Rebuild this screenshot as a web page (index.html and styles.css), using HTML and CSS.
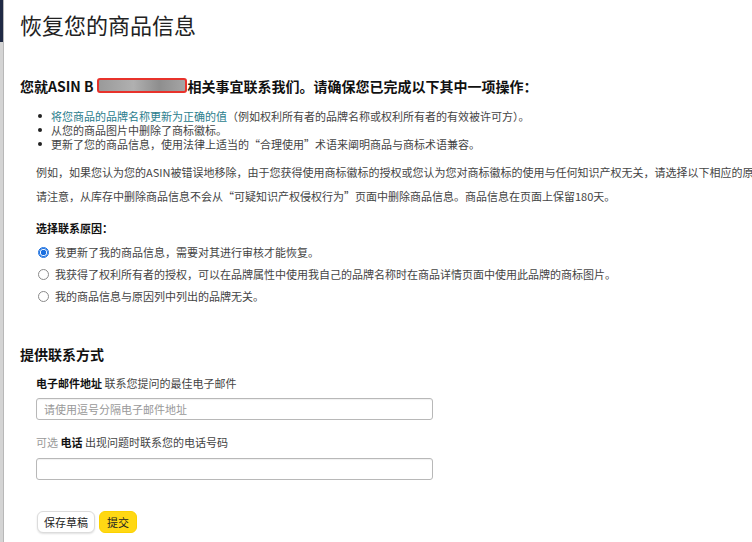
FILE: index.html
```html
<!DOCTYPE html>
<html lang="zh-CN">
<head>
<meta charset="utf-8">
<title>恢复您的商品信息</title>
<link rel="stylesheet" href="styles.css">
</head>
<body>
<div class="frame">
  <div class="edge"><div class="edge-top"></div></div>
  <main class="content">
    <h1 class="title">恢复您的商品信息</h1>
    <h2 class="lead">您就ASIN B<span class="redact"></span>相关事宜联系我们。请确保您已完成以下其中一项操作：</h2>
    <ul class="steps">
      <li><a class="link" href="#">将您商品的品牌名称更新为正确的值</a>（例如权利所有者的品牌名称或权利所有者的有效被许可方）。</li>
      <li>从您的商品图片中删除了商标徽标。</li>
      <li>更新了您的商品信息，使用法律上适当的“合理使用”术语来阐明商品与商标术语兼容。</li>
    </ul>
    <p class="note">例如，如果您认为您的ASIN被错误地移除，由于您获得使用商标徽标的授权或您认为您对商标徽标的使用与任何知识产权无关，请选择以下相应的原因。</p>
    <p class="note second">请注意，从库存中删除商品信息不会从“可疑知识产权侵权行为”页面中删除商品信息。商品信息在页面上保留180天。</p>
    <div class="reason-label">选择联系原因：</div>
    <div class="reasons">
      <label class="reason"><input type="radio" name="r" checked><span>我更新了我的商品信息，需要对其进行审核才能恢复。</span></label>
      <label class="reason"><input type="radio" name="r"><span>我获得了权利所有者的授权，可以在品牌属性中使用我自己的品牌名称时在商品详情页面中使用此品牌的商标图片。</span></label>
      <label class="reason"><input type="radio" name="r"><span>我的商品信息与原因列中列出的品牌无关。</span></label>
    </div>
    <h2 class="section">提供联系方式</h2>
    <div class="field-label"><b>电子邮件地址</b> 联系您提问的最佳电子邮件</div>
    <input class="text-input" type="text" placeholder="请使用逗号分隔电子邮件地址">
    <div class="field-label phone"><span class="optional">可选</span> <b>电话</b> 出现问题时联系您的电话号码</div>
    <input class="text-input" type="text">
    <div class="actions">
      <button class="btn btn-save" type="button">保存草稿</button>
      <button class="btn btn-submit" type="button">提交</button>
    </div>
  </main>
</div>
</body>
</html>
```
FILE: styles.css
```css
html, body {
  margin: 0;
  padding: 0;
  background: #fff;
  overflow: hidden;
}
body {
  font-family: "Noto Sans CJK SC", "Liberation Sans", sans-serif;
  color: #333;
  width: 752px;
  height: 542px;
}
.frame {
  display: flex;
  height: 542px;
}
.edge {
  width: 3px;
  flex: none;
  background: #d4d4d4;
  border-right: 1px solid #b8b8b8;
}
.edge-top {
  height: 42px;
  background: #1f2a44;
}
.content {
  flex: 1;
  min-width: 0;
  padding-left: 16px;
  overflow: hidden;
}
.title {
  margin: 11px 0 0;
  font-size: 22px;
  line-height: 26px;
  font-weight: normal;
  color: #222;
}
.lead {
  margin: 39px 0 0;
  font-size: 14px;
  line-height: 20px;
  font-weight: bold;
  color: #111;
  white-space: nowrap;
}
.redact {
  display: inline-block;
  width: 86px;
  height: 11px;
  vertical-align: -1px;
  margin: 0 1px 0 3px;
  border: 2px solid #e8322b;
  border-radius: 3px;
  background: linear-gradient(90deg, #9a9a9a 0%, #b0b0b0 40%, #8e8e8e 70%, #a5a5a5 100%);
}
.steps {
  margin: 13px 0 0;
  padding: 0 0 0 31px;
  list-style: none;
  font-size: 11px;
  line-height: 14px;
  color: #444;
  white-space: nowrap;
}
.steps li {
  position: relative;
}
.steps li::before {
  content: "";
  position: absolute;
  left: -13px;
  top: 5px;
  width: 4px;
  height: 4px;
  border-radius: 50%;
  background: #222;
}
.link {
  color: #2b7d8d;
  text-decoration: none;
}
.note {
  margin: 13px 0 0 16px;
  font-size: 11px;
  line-height: 16px;
  color: #444;
  white-space: nowrap;
}
.note.second {
  margin-top: 8px;
}
.reason-label {
  margin: 16px 0 0 16px;
  font-size: 11px;
  line-height: 16px;
  font-weight: bold;
  color: #111;
}
.reasons {
  margin: 5px 0 0 16px;
  display: flex;
  flex-direction: column;
}
.reason {
  display: flex;
  align-items: center;
  gap: 6px;
  height: 22px;
  font-size: 11px;
  color: #444;
  white-space: nowrap;
}
.reason input {
  appearance: none;
  -webkit-appearance: none;
  margin: 0 0 0 2px;
  width: 11px;
  height: 11px;
  border: 1px solid #8a8a8a;
  border-radius: 50%;
  background: #fff;
  flex: none;
}
.reason input:checked {
  border-color: #1a6fe0;
  background: radial-gradient(circle, #1a6fe0 0 2.5px, #fff 3px 100%);
  box-shadow: inset 0 0 0 1px #1a6fe0;
}
.section {
  margin: 37px 0 0;
  font-size: 14px;
  line-height: 20px;
  font-weight: bold;
  color: #111;
}
.field-label {
  margin: 11px 0 0 16px;
  font-size: 11px;
  line-height: 16px;
  color: #444;
}
.field-label b {
  color: #111;
}
.field-label.phone {
  margin-top: 14px;
}
.optional {
  color: #999;
}
.text-input {
  display: block;
  box-sizing: border-box;
  margin: 7px 0 0 16px;
  width: 397px;
  height: 22px;
  padding: 0 7px;
  border: 1px solid #b8b8b8;
  border-radius: 3px;
  box-shadow: inset 0 1px 1px rgba(0,0,0,0.06);
  font-family: "Noto Sans CJK SC", "Liberation Sans", sans-serif;
  font-size: 11px;
  color: #333;
  outline: none;
}
.text-input::placeholder {
  color: #999;
}
.field-label.phone + .text-input {
  margin-top: 8px;
}
.actions {
  margin: 31px 0 0 17px;
  display: flex;
  gap: 4px;
}
.btn {
  height: 22px;
  padding: 0 6px;
  border-radius: 6px;
  font-family: "Noto Sans CJK SC", "Liberation Sans", sans-serif;
  font-size: 11px;
  line-height: 20px;
  color: #222;
  white-space: nowrap;
  cursor: pointer;
}
.btn-save {
  background: #fff;
  border: 1px solid #dcdcdc;
  box-shadow: 0 1px 2px rgba(0,0,0,0.12);
}
.btn-submit {
  padding: 0 7px;
  background: #ffd814;
  border: 1px solid #fcd200;
}
```
